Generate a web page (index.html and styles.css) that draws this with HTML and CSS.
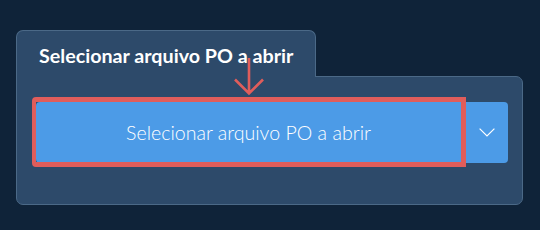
FILE: index.html
```html
<!DOCTYPE html>
<html>
<head>
<meta charset="utf-8">
<link rel="stylesheet" href="styles.css">
</head>
<body>
<div class="page">
  <div class="tab"><span class="tab-title">Selecionar arquivo PO a abrir</span></div>
  <div class="panel">
    <div class="split">
      <div class="main-btn">Selecionar arquivo PO a abrir</div>
      <div class="drop-btn">
        <svg width="16" height="9" viewBox="0 0 16 9"><path d="M0.6 0.6 L8 8 L15.4 0.6" fill="none" stroke="#ffffff" stroke-width="1.2"/></svg>
      </div>
      <div class="highlight"></div>
    </div>
  </div>
  <svg class="arrow" width="32" height="40" viewBox="0 0 32 40"><path d="M16 0 V35 M2 21.5 L16 35.5 L30 21.5" fill="none" stroke="#e05d5b" stroke-width="2.6"/></svg>
</div>
</body>
</html>
```
FILE: styles.css
```css
html, body { margin: 0; padding: 0; }
body {
  background: #0f2339;
  width: 540px;
  height: 230px;
  overflow: hidden;
  font-family: Lato, "Noto Sans", sans-serif;
}
.page {
  position: relative;
  padding: 30px 0 0 16px;
}
.tab {
  position: relative;
  z-index: 1;
  box-sizing: border-box;
  width: 300px;
  height: 47px;
  margin-bottom: -1px;
  background: #2d4a6a;
  border: 1px solid #4b6987;
  border-bottom: none;
  border-radius: 7px 7px 0 0;
  padding: 13px 0 0 22px;
}
.tab-title {
  color: #ffffff;
  font-weight: 700;
  font-size: 19.7px;
  line-height: 24px;
}
.panel {
  box-sizing: border-box;
  width: 507px;
  height: 129px;
  background: #2d4a6a;
  border: 1px solid #4b6987;
  border-radius: 0 7px 7px 7px;
  padding: 25px 14px 0 19px;
}
.split {
  position: relative;
  display: flex;
  height: 61px;
}
.main-btn {
  width: 430px;
  background: #4c9be7;
  border-radius: 4px 0 0 4px;
  color: #ffffff;
  font-size: 19.6px;
  font-weight: 300;
  display: flex;
  align-items: center;
  justify-content: center;
  padding-right: 5px;
  box-sizing: border-box;
}
.drop-btn {
  flex: 1;
  background: #4c9be7;
  border-radius: 0 4px 4px 0;
  display: flex;
  align-items: center;
  justify-content: center;
}
.highlight {
  position: absolute;
  left: -4px;
  top: -5px;
  width: 434px;
  height: 70px;
  box-sizing: border-box;
  border: 5px solid #e05d5b;
  border-left-width: 4px;
  border-radius: 4px 0 0 4px;
}
.arrow {
  position: absolute;
  z-index: 2;
  left: 233px;
  top: 58px;
}
```
